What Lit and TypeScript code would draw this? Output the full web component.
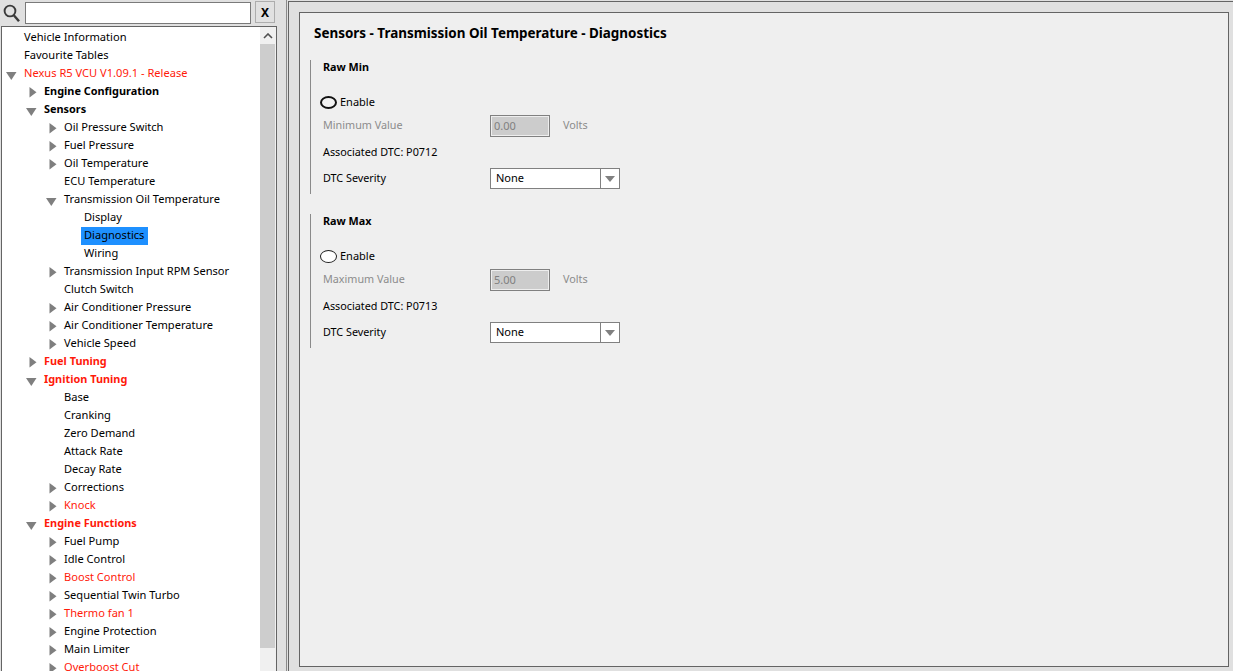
import { LitElement, html, css, svg } from "lit";
import { customElement } from "lit/decorators.js";

type Row = [number, "r" | "d" | "", string, string?];

const rows: Row[] = [
  [0, "", "Vehicle Information"],
  [0, "", "Favourite Tables"],
  [0, "d", "Nexus R5 VCU V1.09.1 - Release", "red"],
  [1, "r", "Engine Configuration", "bold"],
  [1, "d", "Sensors", "bold"],
  [2, "r", "Oil Pressure Switch"],
  [2, "r", "Fuel Pressure"],
  [2, "r", "Oil Temperature"],
  [2, "", "ECU Temperature"],
  [2, "d", "Transmission Oil Temperature"],
  [3, "", "Display"],
  [3, "", "Diagnostics", "sel"],
  [3, "", "Wiring"],
  [2, "r", "Transmission Input RPM Sensor"],
  [2, "", "Clutch Switch"],
  [2, "r", "Air Conditioner Pressure"],
  [2, "r", "Air Conditioner Temperature"],
  [2, "r", "Vehicle Speed"],
  [1, "r", "Fuel Tuning", "bold red"],
  [1, "d", "Ignition Tuning", "bold red"],
  [2, "", "Base"],
  [2, "", "Cranking"],
  [2, "", "Zero Demand"],
  [2, "", "Attack Rate"],
  [2, "", "Decay Rate"],
  [2, "r", "Corrections"],
  [2, "r", "Knock", "red"],
  [1, "d", "Engine Functions", "bold red"],
  [2, "r", "Fuel Pump"],
  [2, "r", "Idle Control"],
  [2, "r", "Boost Control", "red"],
  [2, "r", "Sequential Twin Turbo"],
  [2, "r", "Thermo fan 1", "red"],
  [2, "r", "Engine Protection"],
  [2, "r", "Main Limiter"],
  [2, "r", "Overboost Cut", "red"],
];

const arrow = (k: string) =>
  k === "r"
    ? svg`<svg class="arrow" width="19" height="18" viewBox="0 0 19 18"><path d="M7.5 4v10.5l7-5.2z" fill="#7f7f7f"/></svg>`
    : k === "d"
      ? svg`<svg class="arrow" width="19" height="18" viewBox="0 0 19 18"><path d="M4 7h10.5l-5.2 8z" fill="#7f7f7f"/></svg>`
      : html`<span class="arrow"></span>`;

const groups = [
  { title: "Raw Min", focus: true, label: "Minimum Value", value: "0.00", dtc: "P0712" },
  { title: "Raw Max", focus: false, label: "Maximum Value", value: "5.00", dtc: "P0713" },
];

@customElement("app-root")
export class AppRoot extends LitElement {
  static styles = css`
    :host {
      display: flex;
      width: 1233px;
      height: 671px;
      overflow: hidden;
      background: #e0e0e0;
      font-family: "Noto Sans", sans-serif;
      font-size: 10.8px;
      color: #000;
    }
    .left {
      width: 276px;
      flex: none;
      display: flex;
      flex-direction: column;
      margin-left: 1px;
    }
    .search {
      height: 26px;
      flex: none;
      display: flex;
      align-items: flex-start;
      box-sizing: border-box;
      padding-top: 2px;
    }
    .mag { margin: 2px 5px 0 2px; flex: none; }
    .search input {
      width: 226px;
      height: 22px;
      box-sizing: border-box;
      border: 1px solid #7a7a7a;
      background: #fff;
      margin: 0;
      padding: 0;
      flex: none;
    }
    .x {
      width: 20px;
      height: 22px;
      margin: -1px 0 0 4px;
      box-sizing: border-box;
      border: 1px solid #adadad;
      background: #e1e1e1;
      font-weight: 700;
      font-size: 12px;
      display: flex;
      align-items: center;
      justify-content: center;
    }
    .treebox {
      flex: 1;
      min-height: 0;
      display: flex;
      border: 1px solid #646464;
      border-bottom: 0;
      background: #fff;
    }
    .tree { flex: 1; min-width: 0; overflow: hidden; padding-top: 2px; font-size: 11.1px; }
    .row {
      height: 18px;
      display: flex;
      align-items: center;
      white-space: nowrap;
    }
    .arrow { width: 19px; height: 18px; flex: none; display: block; }
    .label { padding: 0 4px 0 3px; height: 18px; line-height: 16px; }
    .bold .label { font-weight: 700; font-size: 10.9px; }
    .red .label { color: #ff1a0a; }
    .sel .label { background: #1e90ff; }
    .scroll {
      width: 16px;
      flex: none;
      background: #f0f0f0;
      display: flex;
      flex-direction: column;
    }
    .up { height: 17px; width: 15px; display: flex; align-items: center; justify-content: center; }
    .thumb { height: 604px; width: 15px; background: #cdcdcd; }
    .splitter {
      width: 10px;
      flex: none;
      box-sizing: border-box;
      border-right: 1px solid #8a8a8a;
      margin-right: 1px;
    }
    .right {
      flex: 1;
      min-width: 0;
      margin-top: 1px;
      box-sizing: border-box;
      border-left: 1px solid #646464;
      border-top: 1px solid #646464;
      padding: 10px 4px 4px 10px;
      display: flex;
    }
    .page {
      flex: 1;
      box-sizing: border-box;
      background: #efefef;
      border: 1px solid #646464;
      padding: 11px 0 0 10px;
    }
    h1 {
      margin: 0 0 18px 4px;
      font-size: 13.45px;
      font-weight: 700;
      line-height: 18px;
    }
    .group {
      display: flex;
      flex-direction: column;
      align-items: flex-start;
      border-left: 1px solid #8a8a8a;
      width: 340px;
      box-sizing: border-box;
      padding: 0 0 5px 12px;
      margin-bottom: 20px;
    }
    h2 { margin: 0; font-size: 10.8px; font-weight: 700; line-height: 14px; height: 14px; }
    .check {
      margin: 21px 0 0 -3px;
      height: 14px;
      display: flex;
      align-items: center;
      gap: 3px;
      line-height: 14px;
      font-size: 11px;
    }
    .radio {
      width: 17px;
      height: 13px;
      box-sizing: border-box;
      border: 1px solid #222;
      border-radius: 50%;
      background: #fff;
    }
    .radio.focus { border: 2px solid #111; background: #f2f2f2; }
    .field { display: flex; align-items: center; }
    .field > span { line-height: 16px; height: 18px; }
    .name { width: 167px; flex: none; }
    .disabled { color: #8c8c8c; }
    .f1 { margin-top: 6px; height: 22px; }
    .f2 { margin-top: 6px; height: 18px; line-height: 18px; }
    .f2 > span { line-height: 18px; }
    .f3 { margin-top: 7px; height: 21px; }
    .field > .num {
      width: 60px;
      height: 22px;
      box-sizing: border-box;
      border: 1px solid #808080;
      outline: 1px solid #eee;
      outline-offset: -2px;
      background: #cccccc;
      padding: 1px 0 0 3px;
      line-height: 18px;
      color: #808080;
      font-size: 11px;
    }
    .unit { margin-left: 13px; }
    .select {
      width: 130px;
      height: 21px;
      box-sizing: border-box;
      border: 1px solid #808080;
      background: #fff;
      display: flex;
      align-items: center;
      padding-left: 5px;
    }
    .select span { flex: 1; line-height: 17px; height: 19px; font-size: 11px; }
    .btn {
      width: 19px;
      height: 19px;
      box-sizing: border-box;
      border-left: 1px solid #808080;
      display: flex;
      align-items: center;
      justify-content: center;
    }
  `;

  render() {
    return html`
      <div class="left">
        <div class="search">
          <svg class="mag" width="17" height="20" viewBox="0 0 17 20">
            <circle cx="7" cy="7" r="5.4" fill="none" stroke="#3a3a3a" stroke-width="1.9"/>
            <path d="M10.8 11.2l5.2 6" stroke="#3a3a3a" stroke-width="2.4"/>
          </svg>
          <input />
          <div class="x">X</div>
        </div>
        <div class="treebox">
          <div class="tree">
            ${rows.map(
              ([lvl, k, t, c]) => html`<div class="row ${c ?? ""}" style="padding-left:${lvl * 20}px">
                ${arrow(k)}<span class="label">${t}</span>
              </div>`,
            )}
          </div>
          <div class="scroll">
            <div class="up"><svg width="10" height="6" viewBox="0 0 10 6"><path d="M1 5l4-4 4 4" fill="none" stroke="#505050" stroke-width="1.6"/></svg></div>
            <div class="thumb"></div>
          </div>
        </div>
      </div>
      <div class="splitter"></div>
      <div class="right">
        <div class="page">
          <h1>Sensors - Transmission Oil Temperature - Diagnostics</h1>
          ${groups.map(
            (g) => html`<section class="group">
              <h2>${g.title}</h2>
              <div class="check"><span class="radio ${g.focus ? "focus" : ""}"></span>Enable</div>
              <div class="field f1 disabled">
                <span class="name">${g.label}</span>
                <span class="num">${g.value}</span>
                <span class="unit">Volts</span>
              </div>
              <div class="field f2"><span>Associated DTC: ${g.dtc}</span></div>
              <div class="field f3">
                <span class="name">DTC Severity</span>
                <div class="select">
                  <span>None</span>
                  <div class="btn"><svg width="10" height="6" viewBox="0 0 10 6"><path d="M0 0h10L5 6z" fill="#808080"/></svg></div>
                </div>
              </div>
            </section>`,
          )}
        </div>
      </div>
    `;
  }
}
